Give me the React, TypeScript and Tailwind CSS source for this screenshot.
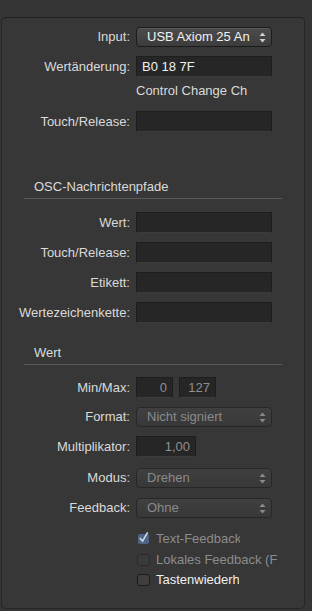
import React from 'react';

const font = { fontFamily: '"Liberation Sans", Arial, sans-serif' };

const Arrows: React.FC<{ dim?: boolean }> = ({ dim }) => (
  <svg width="7" height="11" viewBox="0 0 7 11" className="shrink-0">
    <path d="M3.5 0.5 L6.5 4 L0.5 4 Z" fill={dim ? '#8a8a8a' : '#cfcfcf'} />
    <path d="M3.5 10.5 L6.5 7 L0.5 7 Z" fill={dim ? '#8a8a8a' : '#cfcfcf'} />
  </svg>
);

const Label: React.FC<{ children: React.ReactNode }> = ({ children }) => (
  <div className="w-[128px] shrink-0 text-right text-[13px] leading-4 text-[#dadada]">{children}</div>
);

const Field: React.FC<{ w?: string; value?: string; right?: boolean; dim?: boolean }> = ({ w = 'w-[136px]', value, right, dim }) => (
  <div
    className={`${w} h-[21px] shrink-0 bg-[#262626] border border-[#1e1e1e] border-b-[#3c3c3c] flex items-center px-[5px] text-[13px] ${right ? 'justify-end' : ''} ${dim ? 'text-[#8f8f8f]' : 'text-[#f0f0f0]'}`}
  >
    {value}
  </div>
);

const Select: React.FC<{ value: string; dim?: boolean }> = ({ value, dim }) => (
  <div
    className={`w-[136px] h-[20px] shrink-0 rounded-[4px] border flex items-center justify-between pl-[10px] pr-[5px] text-[13px] ${
      dim
        ? 'border-[#272727] bg-gradient-to-b from-[#404040] to-[#383838] text-[#8a8a8a]'
        : 'border-[#1c1c1c] bg-gradient-to-b from-[#4c4c4c] to-[#3c3c3c] text-[#f2f2f2] shadow-[inset_0_1px_0_#5a5a5a]'
    }`}
  >
    <span className="whitespace-nowrap overflow-hidden">{value}</span>
    <Arrows dim={dim} />
  </div>
);

const Row: React.FC<{ label: string; mt: string; children: React.ReactNode }> = ({ label, mt, children }) => (
  <div className={`flex items-center gap-[6px] ${mt}`}>
    <Label>{label}</Label>
    {children}
  </div>
);

const Heading: React.FC<{ title: string; mt: string }> = ({ title, mt }) => (
  <div className={`${mt} ml-[22px] w-[258px] border-b border-[#5a5a5a] pb-[3px] pl-[10px] text-[13px] leading-4 text-[#dadada]`}>
    {title}
  </div>
);

const Check: React.FC<{ label: string; w: string; checked?: boolean; dim?: boolean; mt: string }> = ({ label, w, checked, dim, mt }) => (
  <div className={`flex items-center ${mt} ml-[135px]`}>
    <div
      className={`w-[13px] h-[12px] shrink-0 rounded-[3px] border flex items-center justify-center ${
        checked ? 'bg-[#4d6482] border-[#2e3a4a]' : dim ? 'bg-[#3a3a3a] border-[#2a2a2a]' : 'bg-[#3f3f3f] border-[#1a1a1a]'
      }`}
    >
      {checked && (
        <svg width="12" height="13" viewBox="0 0 12 13" className="-mt-[4px]">
          <path d="M2 7 L5 10.5 L10.5 1" stroke="#cfd6e0" strokeWidth="1.8" fill="none" />
        </svg>
      )}
    </div>
    <div className={`${w} ml-[6px] overflow-hidden whitespace-nowrap text-[13px] leading-4 ${dim ? 'text-[#8c8c8c]' : 'text-[#f0f0f0]'}`}>
      {label}
    </div>
  </div>
);

export default function App() {
  return (
    <div className="w-[312px] h-[611px] bg-[#353535] overflow-hidden pt-[17px] pl-[1px]" style={font}>
      <div className="w-[304px] h-[592px] rounded-[5px] border border-[#262626] border-t-[#222222] bg-[#373737] pt-[9px] flex flex-col">
        <Row label="Input:" mt="mt-0">
          <Select value="USB Axiom 25 An" />
        </Row>
        <Row label="Wertänderung:" mt="mt-[9px]">
          <Field value="B0 18 7F" />
        </Row>
        <div className="ml-[134px] mt-[6px] text-[13px] leading-4 text-[#dadada]">Control Change Ch</div>
        <Row label="Touch/Release:" mt="mt-[12px]">
          <Field />
        </Row>

        <Heading title="OSC-Nachrichtenpfade" mt="mt-[47px]" />
        <Row label="Wert:" mt="mt-[13px]">
          <Field />
        </Row>
        <Row label="Touch/Release:" mt="mt-[9px]">
          <Field />
        </Row>
        <Row label="Etikett:" mt="mt-[9px]">
          <Field />
        </Row>
        <Row label="Wertezeichenkette:" mt="mt-[9px]">
          <Field />
        </Row>

        <Heading title="Wert" mt="mt-[22px]" />
        <Row label="Min/Max:" mt="mt-[12px]">
          <Field w="w-[37px]" value="0" right dim />
          <Field w="w-[37px]" value="127" right dim />
        </Row>
        <Row label="Format:" mt="mt-[9px]">
          <Select value="Nicht signiert" dim />
        </Row>
        <Row label="Multiplikator:" mt="mt-[9px]">
          <Field w="w-[60px]" value="1,00" right dim />
        </Row>
        <Row label="Modus:" mt="mt-[11px]">
          <Select value="Drehen" dim />
        </Row>
        <Row label="Feedback:" mt="mt-[10px]">
          <Select value="Ohne" dim />
        </Row>

        <Check label="Text-Feedback" w="w-[84px]" checked dim mt="mt-[13px]" />
        <Check label="Lokales Feedback (F" w="w-[122px]" dim mt="mt-[5px]" />
        <Check label="Tastenwiederholung" w="w-[83px]" mt="mt-[4px]" />
      </div>
    </div>
  );
}
